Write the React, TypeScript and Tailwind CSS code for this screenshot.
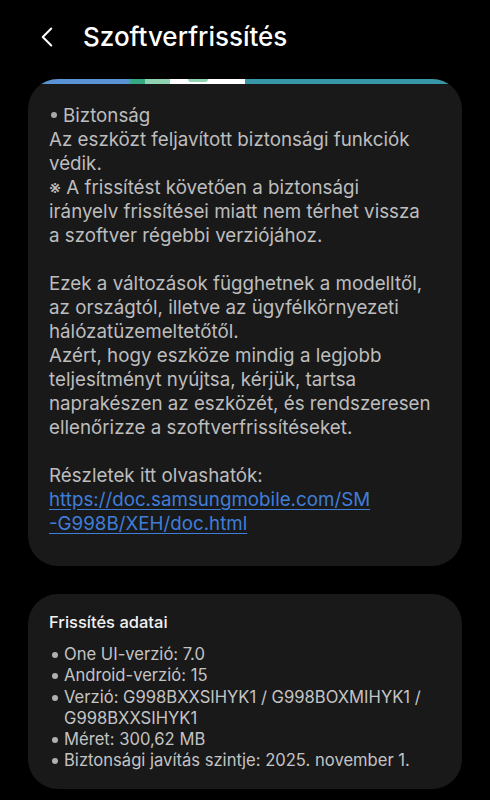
import { ChevronLeft } from 'lucide-react';

const font = { fontFamily: 'Inter, "Noto Sans", sans-serif' };

const details = [
  'One UI-verzió: 7.0',
  'Android-verzió: 15',
  'Verzió: G998BXXSIHYK1 / G998BOXMIHYK1 / G998BXXSIHYK1',
  'Méret: 300,62 MB',
  'Biztonsági javítás szintje: 2025. november 1.',
];

function Strip() {
  return (
    <div className="flex h-[5px] w-full">
      <div className="w-[102px] bg-[#5a92d6]" />
      <div className="w-[15px] bg-[#35a884]" />
      <div className="w-[25px] bg-[#8fd3b2]" />
      <div className="relative w-[75px] bg-white">
        <div className="absolute left-[18px] top-0 h-[3px] w-[20px] rounded-b-full bg-[#8fd3b2]" />
      </div>
      <div className="flex-1 bg-[#3796a8]" />
    </div>
  );
}

export default function App() {
  return (
    <div className="min-h-[800px] w-[490px] bg-black" style={font}>
      <div className="flex h-[79px] items-start pt-[19px]">
        <ChevronLeft className="ml-[30px] mt-[1px] h-[34px] w-[34px] text-white" strokeWidth={1.4} />
        <h1 className="ml-[19px] text-[26px] font-medium leading-[36px] text-white">
          Szoftverfrissítés
        </h1>
      </div>

      <div className="mx-[28px] overflow-hidden rounded-[30px] bg-[#19191a]">
        <Strip />
        <div className="whitespace-nowrap px-[21px] pb-[30px] pt-[20px] text-[18.75px] leading-[24px] text-[#bdbdbd]">
          <span className="mb-[3px] ml-[2px] mr-[6px] inline-block h-[6px] w-[6px] rounded-full bg-[#a8a8a8] align-middle" />
          Biztonság<br />
          Az eszközt feljavított biztonsági funkciók<br />
          védik.<br />
          ※ A frissítést követően a biztonsági<br />
          irányelv frissítései miatt nem térhet vissza<br />
          a szoftver régebbi verziójához.<br />
          <br />
          Ezek a változások függhetnek a modelltől,<br />
          az országtól, illetve az ügyfélkörnyezeti<br />
          hálózatüzemeltetőtől.<br />
          Azért, hogy eszköze mindig a legjobb<br />
          teljesítményt nyújtsa, kérjük, tartsa<br />
          naprakészen az eszközét, és rendszeresen<br />
          ellenőrizze a szoftverfrissítéseket.<br />
          <br />
          Részletek itt olvashatók:<br />
          <a className="text-[#3f7ed8] underline underline-offset-[3px]" href="#">
            https://doc.samsungmobile.com/SM
            <br />
            -G998B/XEH/doc.html
          </a>
        </div>
      </div>

      <div className="mx-[28px] mt-[28px] rounded-[30px] bg-[#19191a] px-[21px] pb-[17px] pt-[16px]">
        <h2 className="text-[16.5px] font-medium leading-[24px] text-[#f2f2f2]">Frissítés adatai</h2>
        <ul className="mt-[10px] text-[16.6px] leading-[21.3px] text-[#c4c4c4]">
          {details.map((d) => (
            <li key={d} className="flex items-start">
              <span className="ml-[3px] mr-[6px] mt-[8px] h-[6px] w-[6px] shrink-0 rounded-full bg-[#b0b0b0]" />
              <span>{d}</span>
            </li>
          ))}
        </ul>
      </div>
    </div>
  );
}
